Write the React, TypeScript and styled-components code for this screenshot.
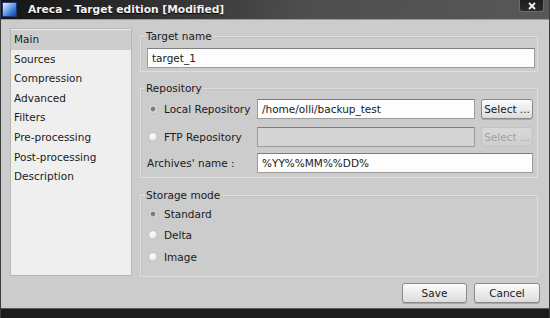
import React from 'react'
import styled, { createGlobalStyle, css } from 'styled-components'

const GlobalStyle = createGlobalStyle`
  html, body {
    margin: 0;
    padding: 0;
    width: 550px;
    height: 318px;
    overflow: hidden;
    background: #1c1c1c;
  }
  body {
    font-family: 'DejaVu Sans', 'Liberation Sans', sans-serif;
    font-size: 10.5px;
    color: #1a1a1a;
  }
`

// window frame
const Window = styled.div`
  width: 550px;
  height: 318px;
  display: flex;
  flex-direction: column;
  box-sizing: border-box;
  background: #cccccc;
  border-left: 1px solid #3c3c3c;
  border-right: 1px solid #3c3c3c;
`

const TitleBar = styled.div`
  height: 19px;
  flex: none;
  display: flex;
  align-items: center;
  position: relative;
  padding-left: 1px;
  background: linear-gradient(100deg, #141414 0%, #2e2e2e 25%, #4e4e4e 55%, #585858 100%);
  border-bottom: 1px solid #9a9a9a;
`

const AppIcon = styled.div`
  width: 13px;
  height: 13px;
  border: 1px solid #1b3a70;
  background: linear-gradient(135deg, #f4f8ff 0%, #8db4ee 35%, #2a6ad0 75%, #164a9e 100%);
`

const Title = styled.span`
  margin-left: 11px;
  color: #f2f2f2;
  font-weight: bold;
  font-size: 10.7px;
  text-shadow: 0 1px 1px #000;
`

const CloseButton = styled.div`
  position: absolute;
  top: 0;
  right: 5px;
  width: 25px;
  height: 12px;
  box-sizing: border-box;
  background: linear-gradient(#1e1e1e, #2c2c2c);
  border: 1px solid #6a6a6a;
  border-top: none;
  border-radius: 0 0 3px 3px;
  display: flex;
  align-items: center;
  justify-content: center;
`

const Body = styled.div`
  flex: 1;
  display: flex;
  flex-direction: column;
  padding: 8px 11px 4px 9px;
  min-height: 0;
`

const Content = styled.div`
  display: flex;
  gap: 8px;
  align-items: flex-start;
`

const Sidebar = styled.ul`
  list-style: none;
  margin: 0;
  padding: 1px 0 0;
  width: 122px;
  height: 248px;
  box-sizing: border-box;
  background: #efefef;
  border: 1px solid #b7b7b7;
`

const NavItem = styled.li<{ $selected?: boolean }>`
  height: 19.6px;
  line-height: 19.6px;
  padding-left: 3px;
  ${({ $selected }) =>
    $selected &&
    css`
      background: #cdcdcd;
    `}
`

const Main = styled.div`
  flex: 1;
  display: flex;
  flex-direction: column;
  padding-top: 2px;
`

const Group = styled.fieldset<{ $height: number; $gap?: number }>`
  margin: ${({ $gap }) => $gap ?? 0}px 0 0;
  padding: 0 4px 0 6px;
  height: ${({ $height }) => $height}px;
  box-sizing: border-box;
  border: 1px solid #dedede;
  box-shadow: inset 1px 1px 0 #c4c4c4;
  display: flex;
  flex-direction: column;
`

const Legend = styled.legend`
  padding: 0 1px;
  margin-left: -2px;
  line-height: 13px;
`

const FormGrid = styled.div`
  display: grid;
  grid-template-columns: 104px 1fr 52px;
  column-gap: 6px;
  align-items: center;
  margin-top: 4px;
`

const TextInput = styled.div<{ $disabled?: boolean; $span?: boolean }>`
  height: 20px;
  box-sizing: border-box;
  border: 1px solid #9c9c9c;
  border-top-color: #7e7e7e;
  background: ${({ $disabled }) => ($disabled ? '#d4d4d4' : '#fdfdfd')};
  padding: 0 4px;
  line-height: 18px;
  white-space: nowrap;
  overflow: hidden;
  ${({ $span }) =>
    $span &&
    css`
      grid-column: 2 / 4;
    `}
`

const Button = styled.div<{ $disabled?: boolean; $width?: number }>`
  height: 20px;
  box-sizing: border-box;
  ${({ $width }) => $width && css`width: ${$width}px;`}
  border: 1px solid ${({ $disabled }) => ($disabled ? '#c2c2c2' : '#8a8a8a')};
  border-radius: 3px;
  background: ${({ $disabled }) =>
    $disabled ? 'linear-gradient(#d8d8d8, #cfcfcf)' : 'linear-gradient(#fbfbfb, #e9e9e9 60%, #dcdcdc)'};
  color: ${({ $disabled }) => ($disabled ? '#a2a2a2' : '#1a1a1a')};
  box-shadow: ${({ $disabled }) => ($disabled ? 'none' : '0 1px 0 #a8a8a8')};
  display: flex;
  align-items: center;
  justify-content: center;
  white-space: nowrap;
`

const RadioRow = styled.label<{ $height?: number }>`
  display: flex;
  align-items: center;
  gap: 6px;
  padding-left: 1px;
  ${({ $height }) => $height && css`height: ${$height}px;`}
`

const RadioDot = styled.span<{ $checked?: boolean }>`
  width: 10px;
  height: 10px;
  flex: none;
  box-sizing: border-box;
  border-radius: 50%;
  border: 1px solid #c2c2c2;
  background: ${({ $checked }) =>
    $checked
      ? 'radial-gradient(circle, #6e6e6e 0, #8a8a8a 2px, #d8d8d8 3px, #f2f2f2 5px)'
      : 'radial-gradient(circle at 40% 35%, #ffffff 0, #f0f0f0 3px, #dadada 5px)'};
`

const StorageList = styled.div`
  display: flex;
  flex-direction: column;
  margin-top: 1px;
`

const ButtonRow = styled.div`
  display: flex;
  justify-content: flex-end;
  gap: 7px;
  margin-top: 6px;
  margin-right: -2px;
`

const BottomStrip = styled.div`
  height: 9px;
  flex: none;
  background: #1c1c1c;
  border-top: 1px solid #5a5a5a;
`

const sections = [
  'Main',
  'Sources',
  'Compression',
  'Advanced',
  'Filters',
  'Pre-processing',
  'Post-processing',
  'Description',
]

const App: React.FC = () => {
  return (
    <>
      <GlobalStyle />
      <Window>
        <TitleBar>
          <AppIcon />
          <Title>Areca - Target edition [Modified]</Title>
          <CloseButton>
            <svg width="8" height="8" viewBox="0 0 8 8">
              <path d="M1 1 L7 7 M7 1 L1 7" stroke="#f4f4f4" strokeWidth="1.8" />
            </svg>
          </CloseButton>
        </TitleBar>
        <Body>
          <Content>
            <Sidebar>
              {sections.map((s, i) => (
                <NavItem key={s} $selected={i === 0}>
                  {s}
                </NavItem>
              ))}
            </Sidebar>
            <Main>
              <Group $height={42} style={{ paddingRight: 2 }}>
                <Legend>Target name</Legend>
                <TextInput style={{ marginTop: 5 }}>target_1</TextInput>
              </Group>
              <Group $height={96} $gap={10}>
                <Legend>Repository</Legend>
                <FormGrid>
                  <RadioRow>
                    <RadioDot $checked />
                    Local Repository
                  </RadioRow>
                  <TextInput>/home/olli/backup_test</TextInput>
                  <Button>Select ...</Button>
                  <RadioRow style={{ marginTop: 8 }}>
                    <RadioDot />
                    FTP Repository
                  </RadioRow>
                  <TextInput $disabled style={{ marginTop: 8 }} />
                  <Button $disabled style={{ marginTop: 8 }}>
                    Select ...
                  </Button>
                  <span style={{ marginTop: 6 }}>Archives' name :</span>
                  <TextInput $span style={{ marginTop: 6 }}>
                    %YY%%MM%%DD%
                  </TextInput>
                </FormGrid>
              </Group>
              <Group $height={88} $gap={11}>
                <Legend>Storage mode</Legend>
                <StorageList>
                  <RadioRow $height={21.5}>
                    <RadioDot $checked />
                    Standard
                  </RadioRow>
                  <RadioRow $height={21.5}>
                    <RadioDot />
                    Delta
                  </RadioRow>
                  <RadioRow $height={21.5}>
                    <RadioDot />
                    Image
                  </RadioRow>
                </StorageList>
              </Group>
            </Main>
          </Content>
          <ButtonRow>
            <Button $width={65}>Save</Button>
            <Button $width={66}>Cancel</Button>
          </ButtonRow>
        </Body>
        <BottomStrip />
      </Window>
    </>
  )
}

export default App
